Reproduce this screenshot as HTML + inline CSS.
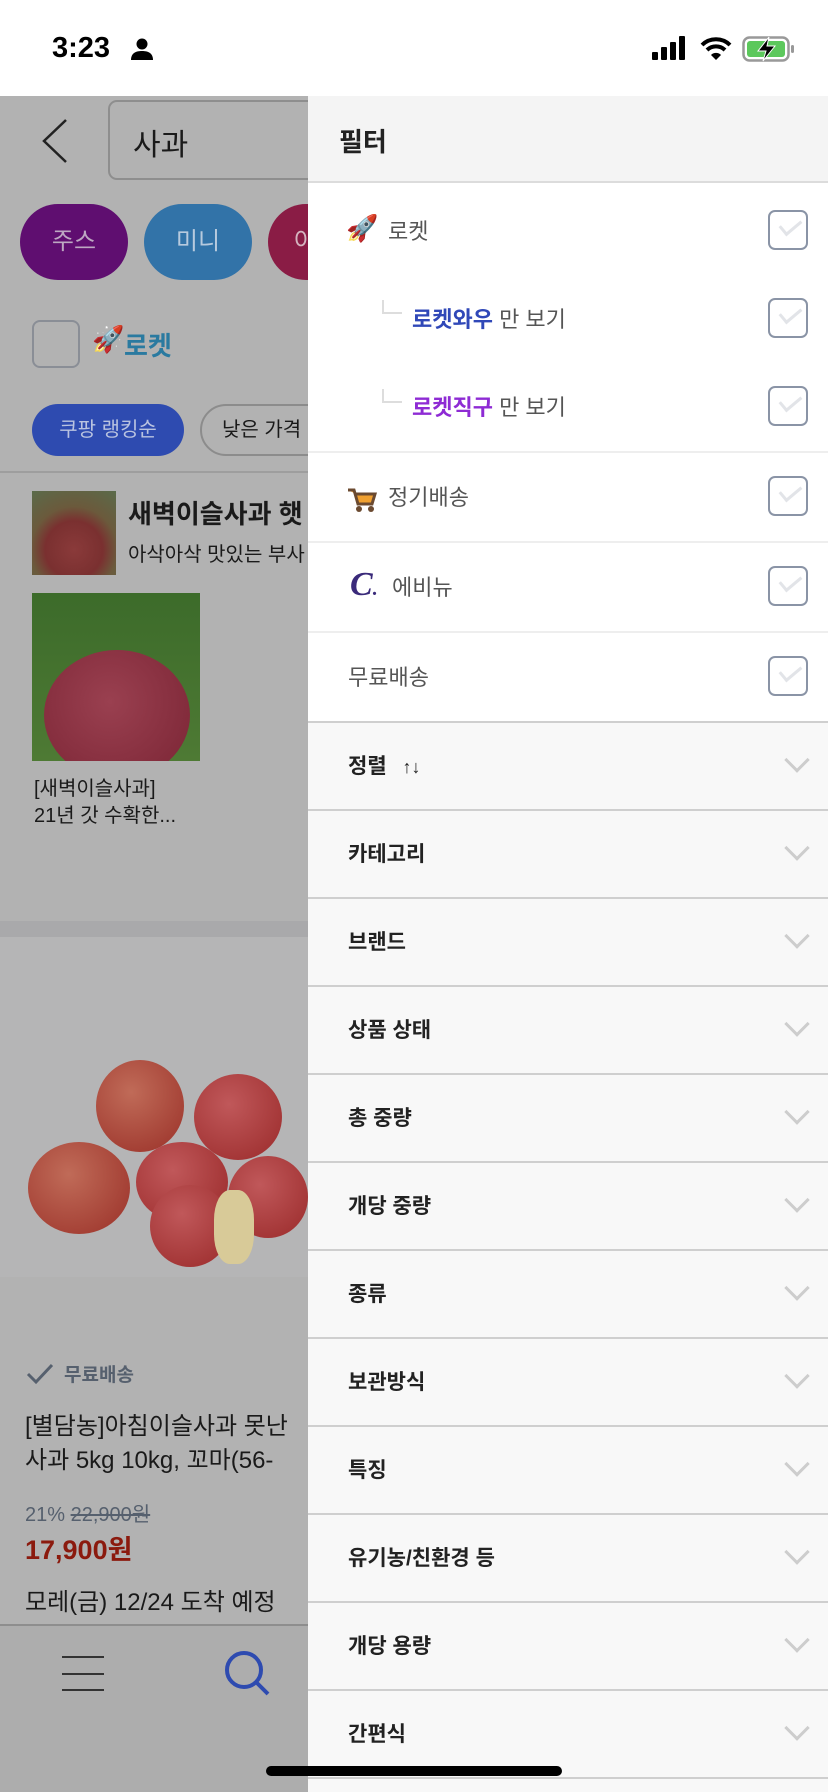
<!DOCTYPE html>
<html style="width:828px;height:1792px;overflow:hidden"><head><meta charset="utf-8"><style>
*{margin:0;padding:0;box-sizing:border-box}
body{width:828px;height:1792px;position:relative;overflow:hidden;background:#b2b2b2;font-family:"Liberation Sans","Noto Sans CJK KR",sans-serif;color:#1a1a1a}
.a{position:absolute}
.chk{position:absolute;left:768px;width:40px;height:40px;border:2px solid #8a94a6;border-radius:7px;background:#fff}
.chk:after{content:"";position:absolute;left:10px;top:7px;width:18px;height:9px;border-left:3px solid #e2e4e8;border-bottom:3px solid #e2e4e8;transform:rotate(-40deg)}
.acc{position:absolute;left:308px;width:520px;height:88px;background:#f8f8f8;border-top:2px solid #cfcfcf}
.acc span{position:absolute;left:40px;top:27px;font-size:21px;font-weight:bold;color:#222}
.acc i{position:absolute;left:480px;top:28px;width:18px;height:18px;border-right:3px solid #cdcdcd;border-bottom:3px solid #cdcdcd;transform:rotate(45deg)}
.row{position:absolute;left:308px;width:520px;font-size:22px;color:#555}
</style></head><body>
<!-- status bar -->
<div class="a" style="left:0;top:0;width:828px;height:96px;background:#fff"></div>
<div class="a" style="left:52px;top:32px;font-size:29px;font-weight:bold;color:#000">3:23</div>
<svg class="a" style="left:130px;top:37px" width="24" height="24" viewBox="0 0 24 24"><circle cx="12" cy="7" r="5.5" fill="#000"/><path d="M1 23c0-7 5-9 11-9s11 2 11 9z" fill="#000"/></svg>
<svg class="a" style="left:652px;top:36px" width="40" height="26"><rect x="0" y="16" width="6" height="8" rx="1"/><rect x="9" y="11" width="6" height="13" rx="1"/><rect x="18" y="6" width="6" height="18" rx="1"/><rect x="27" y="0" width="6" height="24" rx="1"/></svg>
<svg class="a" style="left:700px;top:36px" width="32" height="26" viewBox="0 0 32 26"><path d="M2 9a20 20 0 0 1 28 0" stroke="#000" stroke-width="4" fill="none"/><path d="M7 14a13 13 0 0 1 18 0" stroke="#000" stroke-width="4" fill="none"/><path d="M16 24l-5-5a7 7 0 0 1 10 0z"/></svg>
<svg class="a" style="left:742px;top:36px" width="54" height="26" viewBox="0 0 54 26"><rect x="1.5" y="1.5" width="45" height="23" rx="6" fill="none" stroke="#999" stroke-width="2.5"/><rect x="5" y="5" width="38" height="16" rx="3" fill="#5cc85c"/><rect x="49" y="9" width="3" height="8" rx="1.5" fill="#999"/><path d="M27 1L16 15h8l-3 10 12-15h-8z" fill="#000" stroke="#fff" stroke-width="1"/></svg>

<!-- left dimmed content -->
<svg class="a" style="left:40px;top:118px" width="30" height="46"><path d="M26 2L4 23l22 21" stroke="#222" stroke-width="2.5" fill="none"/></svg>
<div class="a" style="left:108px;top:100px;width:240px;height:80px;border:2px solid #8e8e8e;border-radius:9px"></div>
<div class="a" style="left:133px;top:120px;font-size:30px;color:#1a1a1a">사과</div>
<div class="a" style="left:20px;top:204px;width:108px;height:76px;border-radius:38px;background:#5f0e70;color:#bda8c2;font-size:24px;text-align:center;line-height:76px">주스</div>
<div class="a" style="left:144px;top:204px;width:108px;height:76px;border-radius:38px;background:#3273a8;color:#b7cade;font-size:24px;text-align:center;line-height:76px">미니</div>
<div class="a" style="left:268px;top:204px;width:108px;height:76px;border-radius:38px;background:#8a1c45;color:#d4b4bf;font-size:24px;line-height:76px;padding-left:26px">아</div>
<div class="a" style="left:32px;top:320px;width:48px;height:48px;border:2px solid #8a8e96;border-radius:8px"></div>
<div class="a" style="left:92px;top:324px;font-size:26px">🚀</div>
<div class="a" style="left:124px;top:326px;font-size:26px;font-weight:bold;color:#2a7aa0">로켓</div>
<div class="a" style="left:32px;top:404px;width:152px;height:52px;border-radius:26px;background:#2e4bb0;color:#b9c3e0;font-size:20px;text-align:center;line-height:52px">쿠팡 랭킹순</div>
<div class="a" style="left:200px;top:404px;width:160px;height:52px;border-radius:26px;border:2px solid #8c8c8c;color:#1a1a1a;font-size:20px;line-height:48px;padding-left:20px">낮은 가격</div>
<div class="a" style="left:0;top:471px;width:310px;height:2px;background:#9e9e9e"></div>
<div class="a" style="left:32px;top:491px;width:84px;height:84px;background:radial-gradient(circle at 50% 70%,#8a3a3a 0,#7a3030 40%,#6b5a3c 60%,#5a6b4a 100%)"></div>
<div class="a" style="left:128px;top:494px;font-size:26px;font-weight:bold;white-space:nowrap">새벽이슬사과 햇</div>
<div class="a" style="left:128px;top:538px;font-size:20px;white-space:nowrap">아삭아삭 맛있는 부사</div>
<div class="a" style="left:32px;top:593px;width:168px;height:168px;background:linear-gradient(#3c6b2a,#4e7a34);overflow:hidden"><div style="position:absolute;left:12px;top:57px;width:146px;height:130px;border-radius:50%;background:radial-gradient(circle at 45% 40%,#9a4050,#7a2434)"></div></div>
<div class="a" style="left:34px;top:776px;font-size:20px;line-height:27px">[새벽이슬사과]<br>21년 갓 수확한...</div>
<div class="a" style="left:0;top:921px;width:310px;height:16px;background:#a9a9ab"></div>
<div class="a" style="left:0;top:937px;width:310px;height:340px;background:#b5b5b6"></div>
<div class="a" style="left:28px;top:1142px;width:102px;height:92px;border-radius:50%;background:radial-gradient(circle at 40% 35%,#c06b58,#9a3028)"></div>
<div class="a" style="left:96px;top:1060px;width:88px;height:92px;border-radius:50%;background:radial-gradient(circle at 40% 35%,#c06b58,#9a3028)"></div>
<div class="a" style="left:194px;top:1074px;width:88px;height:86px;border-radius:50%;background:radial-gradient(circle at 40% 35%,#c0585a,#9a2a2a)"></div>
<div class="a" style="left:136px;top:1142px;width:92px;height:80px;border-radius:50%;background:radial-gradient(circle at 40% 35%,#c0585a,#9a2a2a)"></div>
<div class="a" style="left:228px;top:1156px;width:80px;height:82px;border-radius:50%;background:radial-gradient(circle at 40% 35%,#c0585a,#9a2a2a)"></div>
<div class="a" style="left:150px;top:1185px;width:80px;height:82px;border-radius:50%;background:radial-gradient(circle at 40% 35%,#c0585a,#9a2a2a)"></div>
<div class="a" style="left:214px;top:1190px;width:40px;height:74px;border-radius:40%;background:#d8ca98"></div>
<svg class="a" style="left:26px;top:1362px" width="28" height="24"><path d="M2 12l8 8L26 3" stroke="#56606e" stroke-width="3" fill="none"/></svg>
<div class="a" style="left:64px;top:1360px;font-size:19px;font-weight:bold;color:#56606e">무료배송</div>
<div class="a" style="left:25px;top:1410px;font-size:24px;line-height:34px;white-space:nowrap">[별담농]아침이슬사과 못난<br>사과 5kg 10kg, 꼬마(56-</div>
<div class="a" style="left:25px;top:1498px;font-size:20px;color:#56606e">21% <s>22,900원</s></div>
<div class="a" style="left:25px;top:1528px;font-size:27px;font-weight:bold;color:#8b1a0e">17,900원</div>
<div class="a" style="left:25px;top:1582px;font-size:24px;white-space:nowrap">모레(금) 12/24 도착 예정</div>
<div class="a" style="left:0;top:1624px;width:310px;height:168px;background:#adadad;border-top:2px solid #8e8e8e"></div>
<div class="a" style="left:62px;top:1656px;width:42px;height:35px;border-top:2px solid #333;border-bottom:2px solid #333"></div>
<div class="a" style="left:62px;top:1673px;width:42px;height:2px;background:#333"></div>
<svg class="a" style="left:224px;top:1650px" width="50" height="50"><circle cx="20" cy="20" r="17" stroke="#2e4bb0" stroke-width="4" fill="none"/><path d="M32 32l12 12" stroke="#2e4bb0" stroke-width="4"/></svg>

<!-- panel -->
<div class="a" style="left:308px;top:96px;width:520px;height:1696px;background:#fff"></div>
<div class="a" style="left:308px;top:96px;width:520px;height:87px;background:#f4f4f4;border-bottom:2px solid #dcdcdc"></div>
<div class="a" style="left:339px;top:122px;font-size:26px;font-weight:bold;color:#222">필터</div>

<div class="a" style="left:346px;top:213px;font-size:26px">🚀</div>
<div class="row" style="top:214px;left:388px;width:auto">로켓</div>
<div class="chk" style="top:210px"></div>
<div class="a" style="left:382px;top:300px;width:20px;height:14px;border-left:2px solid #ddd;border-bottom:2px solid #ddd"></div>
<div class="row" style="top:302px;left:412px;width:auto"><b style="color:#3048b8">로켓와우</b> 만 보기</div>
<div class="chk" style="top:298px"></div>
<div class="a" style="left:382px;top:389px;width:20px;height:14px;border-left:2px solid #ddd;border-bottom:2px solid #ddd"></div>
<div class="row" style="top:390px;left:412px;width:auto"><b style="color:#8e2bd4">로켓직구</b> 만 보기</div>
<div class="chk" style="top:386px"></div>
<div class="a" style="left:308px;top:451px;width:520px;height:2px;background:#eee"></div>
<svg class="a" style="left:346px;top:484px" width="34" height="30"><path d="M2 6h6l4 14h14l3-10H10" stroke="#6b4a30" stroke-width="3" fill="#f0a030"/><circle cx="13" cy="25" r="3" fill="#6b4a30"/><circle cx="25" cy="25" r="3" fill="#6b4a30"/></svg>
<div class="row" style="top:480px;left:388px;width:auto">정기배송</div>
<div class="chk" style="top:476px"></div>
<div class="a" style="left:308px;top:541px;width:520px;height:2px;background:#eee"></div>
<div class="a" style="left:350px;top:566px;font-family:'Liberation Serif',serif;font-style:italic;font-weight:bold;font-size:34px;color:#3a2a7a">C<span style="font-size:20px">.</span></div>
<div class="row" style="top:570px;left:392px;width:auto">에비뉴</div>
<div class="chk" style="top:566px"></div>
<div class="a" style="left:308px;top:631px;width:520px;height:2px;background:#eee"></div>
<div class="row" style="top:660px;left:348px;width:auto">무료배송</div>
<div class="chk" style="top:656px"></div>

<div class="acc" style="top:721px"><span>정렬 <small style="font-size:18px;margin-left:10px">↑↓</small></span><i></i></div>
<div class="acc" style="top:809px"><span>카테고리</span><i></i></div>
<div class="acc" style="top:897px"><span>브랜드</span><i></i></div>
<div class="acc" style="top:985px"><span>상품 상태</span><i></i></div>
<div class="acc" style="top:1073px"><span>총 중량</span><i></i></div>
<div class="acc" style="top:1161px"><span>개당 중량</span><i></i></div>
<div class="acc" style="top:1249px"><span>종류</span><i></i></div>
<div class="acc" style="top:1337px"><span>보관방식</span><i></i></div>
<div class="acc" style="top:1425px"><span>특징</span><i></i></div>
<div class="acc" style="top:1513px"><span>유기농/친환경 등</span><i></i></div>
<div class="acc" style="top:1601px"><span>개당 용량</span><i></i></div>
<div class="acc" style="top:1689px"><span>간편식</span><i></i></div>
<div class="acc" style="top:1777px;height:15px"></div>
<div class="a" style="left:266px;top:1766px;width:296px;height:10px;border-radius:5px;background:#000"></div>
</body></html>
